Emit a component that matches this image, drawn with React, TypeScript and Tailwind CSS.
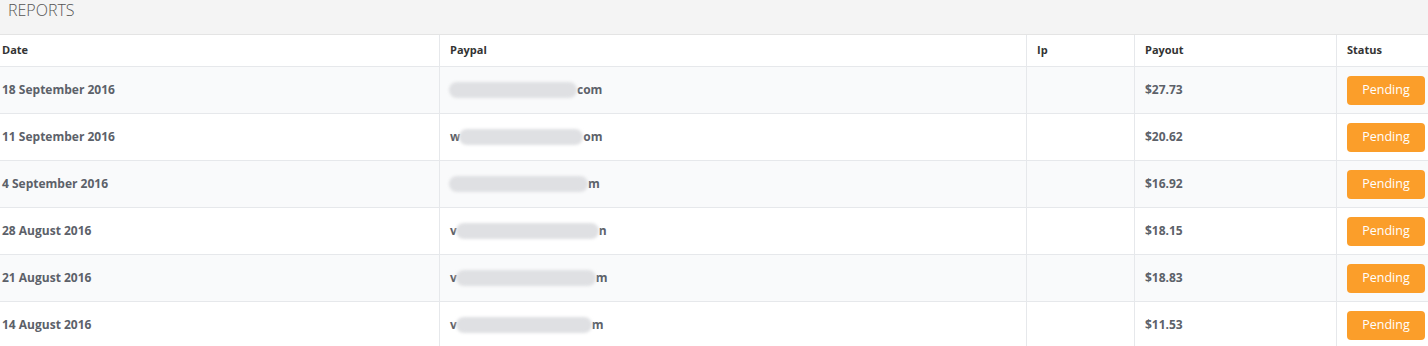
import React from "react";

const rows = [
  { date: "18 September 2016", pre: "", post: "com", blurW: 128, payout: "$27.73" },
  { date: "11 September 2016", pre: "w", post: "om", blurW: 124, payout: "$20.62" },
  { date: "4 September 2016", pre: "", post: "m", blurW: 139, payout: "$16.92" },
  { date: "28 August 2016", pre: "v", post: "n", blurW: 143, payout: "$18.15" },
  { date: "21 August 2016", pre: "v", post: "m", blurW: 140, payout: "$18.83" },
  { date: "14 August 2016", pre: "v", post: "m", blurW: 136, payout: "$11.53" },
];

export default function App() {
  return (
    <div className="w-[1428px] h-[346px] overflow-hidden bg-white" style={{ fontFamily: '"Open Sans", "Liberation Sans", sans-serif' }}>
      <div className="h-[35px] bg-[#f4f4f4] border-b border-[#e4e4e4] pl-[8px] pt-[1px] text-[16px] leading-[18px] text-[#555] font-light">
        REPORTS
      </div>
      <div className="grid grid-cols-[440px_587px_108px_202px_1fr]">
        {["Date", "Paypal", "Ip", "Payout", "Status"].map((h, i) => (
          <div
            key={h}
            className={`h-[32px] flex items-center border-b border-[#e6e8eb] text-[11px] font-bold text-[#333] ${i === 0 ? "pl-[2px]" : "pl-[10px]"} ${i < 4 ? "border-r" : ""}`}
          >
            {h}
          </div>
        ))}
        {rows.map((r, idx) => {
          const bg = idx % 2 === 0 ? "bg-[#f9fafb]" : "bg-white";
          const cell = `h-[47px] flex items-center border-b border-[#e6e8eb] text-[12px] font-bold text-[#5c6169] ${bg}`;
          return (
            <React.Fragment key={r.date}>
              <div className={`${cell} border-r pl-[2px]`}>{r.date}</div>
              <div className={`${cell} border-r pl-[10px]`}>
                {r.pre ? <span>{r.pre}</span> : null}
                <span className="relative inline-block h-[20px] -ml-[1px]" style={{ width: r.blurW }}>
                  <span className="absolute inset-x-0 top-[2px] h-[16px] rounded-[8px] bg-[#dfe0e3] blur-[1.5px]" />
                </span>
                <span>{r.post}</span>
              </div>
              <div className={`${cell} border-r`}></div>
              <div className={`${cell} border-r pl-[10px]`}>{r.payout}</div>
              <div className={`${cell} pl-[10px]`}>
                <span className="w-[78px] h-[29px] rounded-[4px] bg-[#fb9e2a] text-white font-normal text-[12.5px] flex items-center justify-center">
                  Pending
                </span>
              </div>
            </React.Fragment>
          );
        })}
      </div>
    </div>
  );
}
